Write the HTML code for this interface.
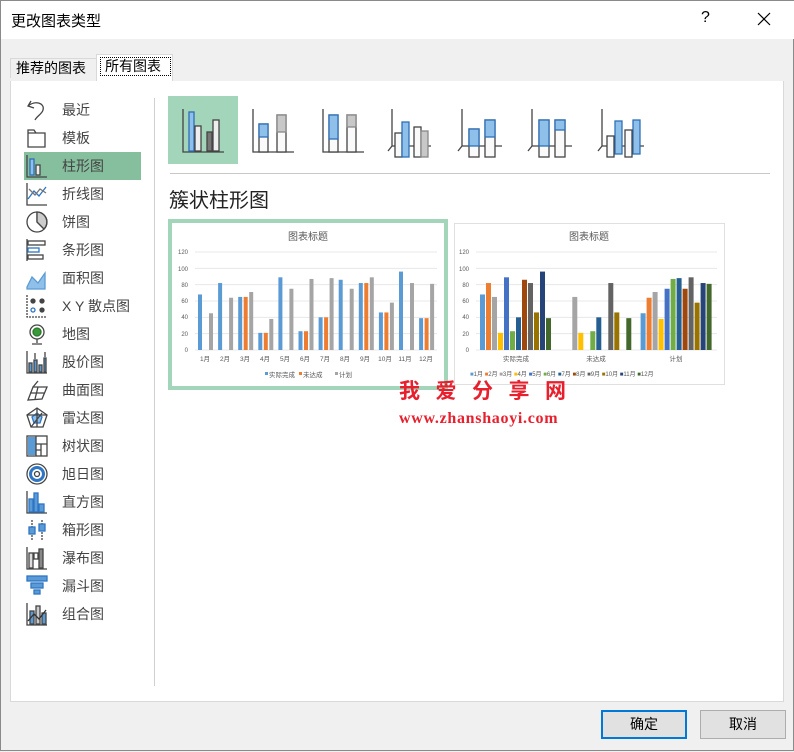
<!DOCTYPE html>
<html><head><meta charset="utf-8">
<style>
*{margin:0;padding:0;box-sizing:border-box}
body{width:794px;height:751px;background:#f0f0f0;font-family:"Liberation Sans","Noto Sans CJK SC",sans-serif;position:relative;overflow:hidden;border:1px solid #8a8a8a}
.abs{position:absolute}
#title{left:0;top:0;width:794px;height:38px;background:#fff}
.side{left:61px;font-size:14px;color:#444;line-height:16px}
.btn{top:709px;width:86px;height:29px;background:#e1e1e1;border:1px solid #adadad;font-size:14px;text-align:center;line-height:27px;color:#000}
</style></head><body>
<div id="title" class="abs"></div>
<div class="abs" style="left:10px;top:9px;font-size:15px;color:#000">更改图表类型</div>
<div class="abs" style="left:700px;top:8px;font-size:16px;color:#000">?</div>
<svg class="abs" style="left:755px;top:10px" width="16" height="16"><path d="M2 2L14 14M14 2L2 14" stroke="#000" stroke-width="1.2"/></svg>
<div class="abs" style="left:9px;top:57px;width:87px;height:20px;border:1px solid #d9d9d9;border-bottom:none;font-size:14px;padding-left:5px;line-height:18px;background:#f0f0f0">推荐的图表</div>
<div class="abs" style="left:95px;top:53px;width:77px;height:27px;border:1px solid #d9d9d9;border-bottom:none;background:#fff"></div>
<div class="abs" style="left:99px;top:56px;width:71px;height:19px;border:1px dotted #000;font-size:14px;padding-left:4px;line-height:17px">所有图表</div>
<div class="abs" style="left:9px;top:80px;width:774px;height:621px;background:#fff;border:1px solid #d9d9d9;border-top:none"></div>
<div class="abs" style="left:153px;top:97px;width:1px;height:588px;background:#d0d0d0"></div>
<div class="abs" style="left:23px;top:151px;width:117px;height:28px;background:#86bf9e"></div>

<div class="abs side" style="top:101px">最近</div>
<div class="abs side" style="top:129px">模板</div>
<div class="abs side" style="top:157px">柱形图</div>
<div class="abs side" style="top:185px">折线图</div>
<div class="abs side" style="top:213px">饼图</div>
<div class="abs side" style="top:241px">条形图</div>
<div class="abs side" style="top:269px">面积图</div>
<div class="abs side" style="top:297px">X Y 散点图</div>
<div class="abs side" style="top:325px">地图</div>
<div class="abs side" style="top:353px">股价图</div>
<div class="abs side" style="top:381px">曲面图</div>
<div class="abs side" style="top:409px">雷达图</div>
<div class="abs side" style="top:437px">树状图</div>
<div class="abs side" style="top:465px">旭日图</div>
<div class="abs side" style="top:493px">直方图</div>
<div class="abs side" style="top:521px">箱形图</div>
<div class="abs side" style="top:549px">瀑布图</div>
<div class="abs side" style="top:577px">漏斗图</div>
<div class="abs side" style="top:605px">组合图</div>

<svg class="abs" style="left:24px;top:96px" width="26" height="530" fill="none" stroke="#444" stroke-width="1.3">
<path d="M6 4L3 9L9 11M3 9C10 3 20 6 18 13C17 17 12 19 10 23"/>
<path d="M3 36H20V50H3Z M3 36V33H9L11 36"/>
<g transform="translate(0,56)"><path d="M2 2V24H22"/><rect x="5" y="6" width="4" height="16" fill="#8fc0ea" stroke="#2e6fb8"/><rect x="11" y="12" width="4" height="10" fill="#eee"/></g>
<g transform="translate(0,84)"><path d="M2 2V24H22" /><path d="M3 18L9 10L14 15L21 6" stroke="#2e75c4"/><path d="M4 8L10 14L15 8L21 12" stroke="#777"/></g>
<g transform="translate(0,112)"><circle cx="12" cy="13" r="10"/><path d="M12 3V13L19 20"/><path d="M12 3A10 10 0 0 1 19 20L12 13Z" fill="#ccc"/></g>
<g transform="translate(0,140)"><path d="M2 2V24"/><rect x="3" y="4" width="17" height="4"/><rect x="3" y="11" width="11" height="4" stroke="#2e75c4"/><rect x="3" y="18" width="15" height="4"/></g>
<g transform="translate(0,168)"><path d="M2 22L7 12L13 18L20 8V24H2Z" fill="#8fc0ea" stroke="#5b9bd5"/></g>
<g transform="translate(0,196)"><path d="M2 2V24H22" stroke-dasharray="2 1"/><circle cx="8" cy="8" r="2" fill="#444"/><circle cx="17" cy="8" r="2" fill="#444"/><circle cx="8" cy="17" r="2" stroke="#2e75c4"/><circle cx="17" cy="17" r="2" fill="#444"/></g>
<g transform="translate(0,224)"><circle cx="12" cy="11" r="7"/><circle cx="12" cy="11" r="4" fill="#3a9a3a" stroke="#2a7a2a"/><path d="M12 18V22M7 23H17"/></g>
<g transform="translate(0,252)"><path d="M2 2V24H22"/><rect x="4" y="14" width="3" height="9" fill="#5b9bd5"/><rect x="9" y="11" width="3" height="12" fill="#5b9bd5"/><rect x="14" y="16" width="3" height="7" fill="#5b9bd5"/><rect x="19" y="9" width="2" height="14" fill="#5b9bd5"/><path d="M10 4V10M20 3V8"/></g>
<g transform="translate(0,280)"><path d="M3 23L8 10H22L17 22Z M5 16H20M13 10L10 22"/><path d="M8 10L13 4" /></g>
<g transform="translate(0,308)"><path d="M12 3L22 10L18 22H6L2 10Z"/><path d="M12 8L17 12L15 18H9L7 12Z" fill="#8fc0ea" stroke="#2e75c4"/><path d="M12 3V22M2 10L22 10M6 22L17 8"/></g>
<g transform="translate(0,336)"><rect x="2" y="3" width="20" height="20"/><rect x="3" y="4" width="8" height="18" fill="#5b9bd5" stroke="none"/><path d="M11 3V23M11 11H22M16 11V23M11 17H16"/></g>
<g transform="translate(0,364)"><circle cx="12" cy="13" r="10"/><circle cx="12" cy="13" r="6.5" stroke="#2e75c4" stroke-width="3"/><circle cx="12" cy="13" r="2.5"/></g>
<g transform="translate(0,392)"><path d="M2 2V24H22"/><rect x="4" y="10" width="4" height="13" fill="#5b9bd5" stroke="#2e75c4"/><rect x="9" y="4" width="4" height="19" fill="#5b9bd5" stroke="#2e75c4"/><rect x="14" y="15" width="5" height="8" fill="#5b9bd5" stroke="#2e75c4"/></g>
<g transform="translate(0,420)"><path d="M7 3V24M17 3V24" stroke-dasharray="2 1"/><rect x="4" y="10" width="6" height="7" fill="#5b9bd5" stroke="#2e75c4"/><rect x="14" y="7" width="6" height="7" fill="#5b9bd5" stroke="#2e75c4"/></g>
<g transform="translate(0,448)"><path d="M2 2V24H22"/><rect x="4" y="8" width="4" height="15" fill="#ddd"/><rect x="9" y="8" width="4" height="6"/><rect x="14" y="4" width="4" height="19" fill="#888"/></g>
<g transform="translate(0,476)"><rect x="2" y="3" width="20" height="5" fill="#5b9bd5" stroke="#2e75c4"/><rect x="6" y="10" width="12" height="5" fill="#5b9bd5" stroke="#2e75c4"/><rect x="9" y="17" width="6" height="4" fill="#5b9bd5" stroke="#2e75c4"/></g>
<g transform="translate(0,504)"><path d="M2 2V24H22"/><rect x="5" y="10" width="4" height="13" fill="#5b9bd5"/><rect x="11" y="5" width="4" height="18" fill="#ccc"/><rect x="17" y="12" width="4" height="11" fill="#5b9bd5"/><path d="M3 20L9 13L14 18L21 9" stroke="#333"/></g>
</svg>

<div class="abs" style="left:167px;top:95px;width:70px;height:68px;background:#a2d5b9"></div>
<svg class="abs" style="left:167px;top:95px" width="480" height="70" fill="none" stroke="#444" stroke-width="1.3">
<g><path d="M15 13V56H56"/><rect x="21" y="16" width="5" height="39" fill="#8fc0ea" stroke="#2e6fb8"/><rect x="27" y="30" width="6" height="25" fill="#eee"/><rect x="39" y="36" width="5" height="19" fill="#777"/><rect x="45" y="24" width="6" height="31" fill="#eee"/></g>
<g transform="translate(70,0)"><path d="M15 13V56H56"/><rect x="21" y="28" width="9" height="28" fill="#fafafa"/><rect x="21" y="28" width="9" height="13" fill="#8fc0ea" stroke="#2e6fb8"/><rect x="39" y="19" width="9" height="37" fill="#fafafa"/><rect x="39" y="19" width="9" height="17" fill="#c8c8c8" stroke="#888"/></g>
<g transform="translate(140,0)"><path d="M15 13V56H56"/><rect x="21" y="19" width="9" height="37" fill="#fafafa"/><rect x="21" y="19" width="9" height="24" fill="#8fc0ea" stroke="#2e6fb8"/><rect x="39" y="19" width="9" height="37" fill="#fafafa"/><rect x="39" y="19" width="9" height="12" fill="#c8c8c8" stroke="#888"/></g>
<g transform="translate(210,0)"><path d="M14 13V50H53M14 50L10 55"/><rect x="17" y="37" width="7" height="24" fill="#fafafa"/><rect x="24" y="26" width="7" height="35" fill="#8fc0ea" stroke="#2e6fb8"/><rect x="36" y="31" width="7" height="30" fill="#fafafa"/><rect x="43" y="35" width="7" height="26" fill="#c8c8c8" stroke="#888"/></g>
<g transform="translate(280,0)"><path d="M14 13V50H54M14 50L10 55"/><rect x="21" y="33" width="10" height="28" fill="#fafafa"/><rect x="21" y="33" width="10" height="17" fill="#8fc0ea" stroke="#2e6fb8"/><rect x="37" y="24" width="10" height="37" fill="#fafafa"/><rect x="37" y="24" width="10" height="17" fill="#8fc0ea" stroke="#2e6fb8"/></g>
<g transform="translate(350,0)"><path d="M14 13V50H54M14 50L10 55"/><rect x="21" y="24" width="10" height="37" fill="#fafafa"/><rect x="21" y="24" width="10" height="26" fill="#8fc0ea" stroke="#2e6fb8"/><rect x="37" y="24" width="10" height="37" fill="#fafafa"/><rect x="37" y="24" width="10" height="10" fill="#8fc0ea" stroke="#2e6fb8"/></g>
<g transform="translate(420,0)"><path d="M14 13V50H56M14 50L10 55"/><rect x="27" y="25" width="7" height="33" fill="#8fc0ea" stroke="#2e6fb8"/><rect x="45" y="24" width="7" height="34" fill="#8fc0ea" stroke="#2e6fb8"/><rect x="19" y="40" width="7" height="21" fill="#fafafa"/><rect x="37" y="34" width="7" height="27" fill="#fafafa"/></g>
</svg>
<div class="abs" style="left:169px;top:172px;width:600px;height:1px;background:#c8c8c8"></div>
<div class="abs" style="left:168px;top:183px;font-size:20px;color:#222">簇状柱形图</div>

<div class="abs" style="left:167px;top:218px;width:280px;height:171px;border:4px solid #a2d5b9;background:#fff"></div>
<div class="abs" style="left:453px;top:222px;width:271px;height:162px;border:1px solid #e0e0e0;background:#fff"></div>

<svg id="c1" class="abs" style="left:0;top:0" width="794" height="751" font-family="Liberation Sans,Noto Sans CJK SC,sans-serif">
<text x="307" y="239" font-size="10" fill="#595959" text-anchor="middle">图表标题</text>
<text x="588" y="239" font-size="10" fill="#595959" text-anchor="middle">图表标题</text>
<g font-size="6" fill="#595959" text-anchor="end">
<text x="187" y="253">120</text><text x="187" y="270">100</text><text x="187" y="286">80</text><text x="187" y="302">60</text><text x="187" y="318">40</text><text x="187" y="335">20</text><text x="187" y="351">0</text>
<text x="468" y="253">120</text><text x="468" y="270">100</text><text x="468" y="286">80</text><text x="468" y="302">60</text><text x="468" y="318">40</text><text x="468" y="335">20</text><text x="468" y="351">0</text>
</g>
<g font-size="6.5" fill="#595959" text-anchor="middle">
<text x="204" y="360">1月</text><text x="224" y="360">2月</text><text x="244" y="360">3月</text><text x="264" y="360">4月</text><text x="284" y="360">5月</text><text x="304" y="360">6月</text><text x="324" y="360">7月</text><text x="344" y="360">8月</text><text x="364" y="360">9月</text><text x="384" y="360">10月</text><text x="404" y="360">11月</text><text x="425" y="360">12月</text>
<text x="515" y="360">实际完成</text><text x="595" y="360">未达成</text><text x="675" y="360">计划</text>
</g>
<g font-size="6.5" fill="#595959">
<rect x="264" y="371" width="3" height="3" fill="#5b9bd5"/><text x="268" y="376">实际完成</text>
<rect x="298" y="371" width="3" height="3" fill="#ed7d31"/><text x="302" y="376">未达成</text>
<rect x="334" y="371" width="3" height="3" fill="#a5a5a5"/><text x="338" y="376">计划</text>
</g>
<g id="bars"></g>
</svg>
<script>
var s1=[68,82,65,21,89,23,40,86,82,46,96,39],s2=[0,0,65,21,0,23,40,0,82,46,0,39],s3=[45,64,71,38,75,87,88,75,89,58,82,81];
var cols=['#5b9bd5','#ed7d31','#a5a5a5','#ffc000','#4472c4','#70ad47','#255e91','#9e480e','#636363','#997300','#264478','#43682b'];
var h='',y0=349,k=98/120;
for(var v=0;v<=120;v+=20){var y=y0-v*k;h+='<line x1="194" x2="436" y1="'+y+'" y2="'+y+'" stroke="#e3e3e3" stroke-width="0.8"/>';h+='<line x1="475" x2="716" y1="'+y+'" y2="'+y+'" stroke="#e3e3e3" stroke-width="0.8"/>';}
for(var i=0;i<12;i++){var gx=194+i*20.1;[s1,s2,s3].forEach(function(s,j){if(s[i])h+='<rect x="'+(gx+3+j*5.5)+'" y="'+(y0-s[i]*k)+'" width="4" height="'+(s[i]*k)+'" fill="'+['#5b9bd5','#ed7d31','#a5a5a5'][j]+'"/>';});}
[s1,s2,s3].forEach(function(s,g){var gx=475+g*80.3+4;for(var m=0;m<12;m++){if(s[m])h+='<rect x="'+(gx+m*6)+'" y="'+(y0-s[m]*k)+'" width="5" height="'+(s[m]*k)+'" fill="'+cols[m]+'"/>';}});
document.getElementById('bars').innerHTML=h;
</script>
<div class="abs" style="left:469px;top:368px;font-size:6px;color:#595959;white-space:nowrap;letter-spacing:0">
<span style="color:#5b9bd5">■</span>1月 <span style="color:#ed7d31">■</span>2月 <span style="color:#a5a5a5">■</span>3月 <span style="color:#ffc000">■</span>4月 <span style="color:#4472c4">■</span>5月 <span style="color:#70ad47">■</span>6月 <span style="color:#255e91">■</span>7月 <span style="color:#9e480e">■</span>8月 <span style="color:#636363">■</span>9月 <span style="color:#997300">■</span>10月 <span style="color:#264478">■</span>11月 <span style="color:#43682b">■</span>12月</div>

<div class="abs" style="left:398px;top:376px;font-size:21px;font-weight:bold;color:#e8202e;letter-spacing:15.5px;font-family:'Noto Sans CJK SC',sans-serif;line-height:26px;white-space:nowrap">我爱分享网</div>
<div class="abs" style="left:398px;top:409px;font-size:16px;font-weight:bold;color:#e8202e;font-family:'Liberation Serif',serif;white-space:nowrap;letter-spacing:0.7px">www.zhanshaoyi.com</div>

<div class="abs btn" style="left:600px;border:2px solid #0078d7;line-height:25px">确定</div>
<div class="abs btn" style="left:699px">取消</div>
</body></html>
